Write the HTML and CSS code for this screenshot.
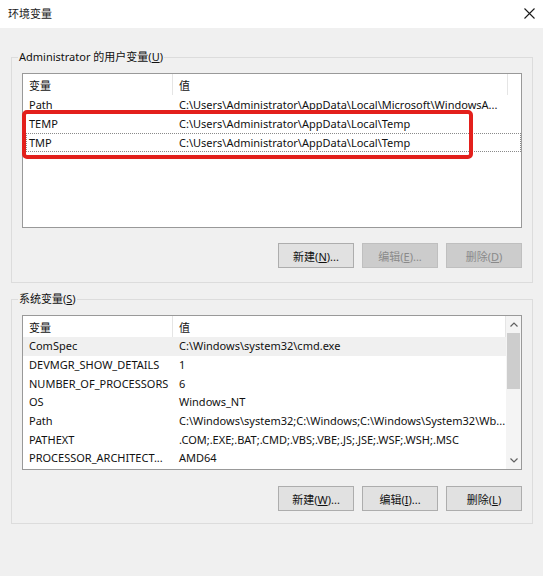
FILE: index.html
```html
<!DOCTYPE html>
<html lang="zh-CN">
<head>
<meta charset="utf-8">
<title>环境变量</title>
<link rel="stylesheet" href="styles.css">
</head>
<body>
<div class="dialog">
  <div class="titlebar">
    <span class="title">环境变量</span>
    <svg class="close" width="11" height="11" viewBox="0 0 11 11"><path d="M0.5 0.5L10.5 10.5M10.5 0.5L0.5 10.5" stroke="#1a1a1a" stroke-width="1.1" fill="none"/></svg>
  </div>
  <div class="content">
    <fieldset class="group group-user">
      <legend class="legend">Administrator 的用户变量(<u>U</u>)</legend>
      <div class="list list-user">
        <div class="list-body">
          <div class="row header">
            <div class="cell hcell">变量</div>
            <div class="cell hcell">值</div>
          </div>
          <div class="row"><div class="cell">Path</div><div class="cell">C:\Users\Administrator\AppData\Local\Microsoft\WindowsA...</div></div>
          <div class="row"><div class="cell">TEMP</div><div class="cell">C:\Users\Administrator\AppData\Local\Temp</div></div>
          <div class="row focus"><div class="cell">TMP</div><div class="cell">C:\Users\Administrator\AppData\Local\Temp</div></div>
        </div>
        <div class="mark"></div>
      </div>
      <div class="buttons buttons-user">
        <button class="btn">新建(<u>N</u>)...</button>
        <button class="btn" disabled>编辑(<u>E</u>)...</button>
        <button class="btn" disabled>删除(<u>D</u>)</button>
      </div>
    </fieldset>

    <fieldset class="group group-sys">
      <legend class="legend">系统变量(<u>S</u>)</legend>
      <div class="list list-sys">
        <div class="list-body">
          <div class="row header">
            <div class="cell hcell">变量</div>
            <div class="cell hcell">值</div>
          </div>
          <div class="row selected"><div class="cell">ComSpec</div><div class="cell">C:\Windows\system32\cmd.exe</div></div>
          <div class="row"><div class="cell">DEVMGR_SHOW_DETAILS</div><div class="cell">1</div></div>
          <div class="row"><div class="cell">NUMBER_OF_PROCESSORS</div><div class="cell">6</div></div>
          <div class="row"><div class="cell">OS</div><div class="cell">Windows_NT</div></div>
          <div class="row"><div class="cell">Path</div><div class="cell">C:\Windows\system32;C:\Windows;C:\Windows\System32\Wb...</div></div>
          <div class="row"><div class="cell">PATHEXT</div><div class="cell">.COM;.EXE;.BAT;.CMD;.VBS;.VBE;.JS;.JSE;.WSF;.WSH;.MSC</div></div>
          <div class="row"><div class="cell">PROCESSOR_ARCHITECT...</div><div class="cell">AMD64</div></div>
        </div>
        <div class="scrollbar">
          <div class="sb-btn">
            <svg width="8" height="5" viewBox="0 0 8 5"><path d="M0.5 4.5L4 1L7.5 4.5" stroke="#606060" stroke-width="1.2" fill="none"/></svg>
          </div>
          <div class="sb-track"><div class="sb-thumb"></div></div>
          <div class="sb-btn">
            <svg width="8" height="5" viewBox="0 0 8 5"><path d="M0.5 0.5L4 4L7.5 0.5" stroke="#606060" stroke-width="1.2" fill="none"/></svg>
          </div>
        </div>
      </div>
      <div class="buttons buttons-sys">
        <button class="btn">新建(<u>W</u>)...</button>
        <button class="btn">编辑(<u>I</u>)...</button>
        <button class="btn">删除(<u>L</u>)</button>
      </div>
    </fieldset>
  </div>
</div>
</body>
</html>
```
FILE: styles.css
```css
* { box-sizing: border-box; }
html, body { margin: 0; padding: 0; }
body {
  width: 543px;
  height: 576px;
  background: #f0f0f0;
  font-family: "Noto Sans", "Noto Sans CJK SC", sans-serif;
  font-size: 11px;
  color: #111;
  overflow: hidden;
}
.dialog { width: 543px; height: 576px; }
.titlebar {
  height: 28px;
  background: #fff;
  display: flex;
  align-items: center;
  justify-content: space-between;
  padding: 0 8px 0 8px;
}
.title { font-size: 11px; line-height: 16px; color: #222; }
.close { display: block; margin-bottom: 2px; }
.content {
  padding: 21px 10px 0 11px;
  display: flex;
  flex-direction: column;
  gap: 8px;
}
.group {
  margin: 0;
  border: 1px solid #dcdcdc;
  padding: 8px 10px 14px 10px;
  min-width: 0;
}
.group-sys { padding-bottom: 12px; }
.legend {
  line-height: 16px;
  padding: 0 1px;
  margin-left: -4px;
  color: #111;
}
.list {
  position: relative;
  height: 155px;
  border: 1px solid #999;
  background: #fff;
  display: flex;
}
.list-body { flex: 1; min-width: 0; overflow: hidden; }
.row {
  position: relative;
  display: grid;
  grid-template-columns: 150px 335px;
  height: 19px;
  align-items: center;
}
.list-sys .row { height: 18.7px; grid-template-columns: 150px 1fr; }
.row.header { height: 21px; }
.list-sys .row.header { height: 21px; }
.cell {
  padding-left: 6px;
  white-space: nowrap;
  overflow: hidden;
  line-height: 16px;
}
.hcell {
  height: 100%;
  display: flex;
  align-items: center;
  padding-top: 3px;
  border-right: 1px solid #e5e5e5;
}
.list-sys .hcell { padding-top: 2px; }
.row.selected { background: #f0f0f0; }
.row.focus::after {
  content: "";
  position: absolute;
  left: 3px;
  right: 0;
  top: 0;
  bottom: 0;
  border: 1px dotted #8a8a8a;
}
.mark {
  position: absolute;
  left: -1px;
  top: 36px;
  width: 451px;
  height: 49px;
  border: 4px solid #e3201c;
  border-radius: 5px;
}
.scrollbar {
  width: 15px;
  background: #f4f4f4;
  display: flex;
  flex-direction: column;
}
.sb-btn {
  height: 17px;
  display: flex;
  align-items: center;
  justify-content: center;
}
.sb-track { flex: 1; }
.sb-thumb { height: 56px; background: #cdcdcd; margin: 0 1px; }
.buttons {
  display: flex;
  justify-content: flex-end;
  gap: 8px;
}
.buttons-user { margin-top: 15px; }
.buttons-sys { margin-top: 16px; }
.btn {
  width: 76px;
  height: 25px;
  padding: 0;
  border: 1px solid #adadad;
  background: #e1e1e1;
  font-family: "Noto Sans", "Noto Sans CJK SC", sans-serif;
  font-size: 11px;
  color: #111;
}
.btn:disabled {
  background: #cccccc;
  border-color: #bfbfbf;
  color: #8a8a8a;
}
```
